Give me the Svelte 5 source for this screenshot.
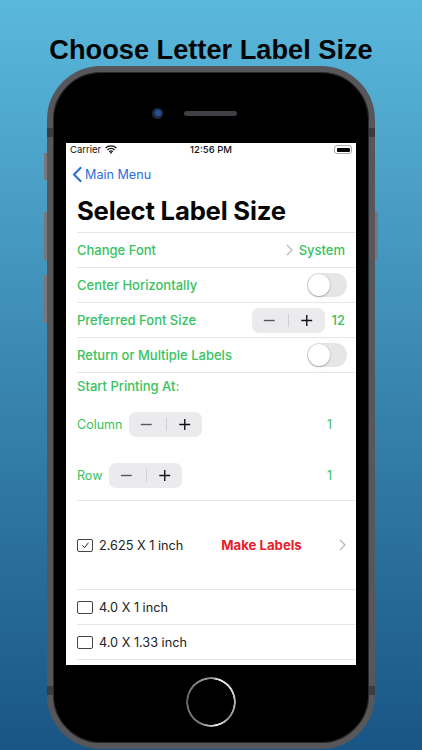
<script>
	const toggleRows = { center: 'Center Horizontally', multi: 'Return or Multiple Labels' };
	const sizes = ['4.0 X 1 inch', '4.0 X 1.33 inch'];
</script>

{#snippet stepper()}
	<div class="stepper">
		<svg width="37" height="25" viewBox="0 0 37 25"><path d="M12 12.5h11" stroke="#55555a" stroke-width="1.4" /></svg>
		<span class="step-div"></span>
		<svg width="36" height="25" viewBox="0 0 36 25"><path d="M12.5 12.5h11M18 7v11" stroke="#111" stroke-width="1.4" /></svg>
	</div>
{/snippet}

{#snippet toggle()}
	<div class="toggle"><span class="knob"></span></div>
{/snippet}

{#snippet chevron()}
	<svg class="chev" width="7" height="12" viewBox="0 0 7 12"><path d="M1 1l5 5-5 5" fill="none" stroke="#bcbcc0" stroke-width="1.4" /></svg>
{/snippet}

<main class="page">
	<h1>Choose Letter Label Size</h1>
	<div class="phone">
		<span class="side s1"></span>
		<span class="side s2"></span>
		<span class="side s3"></span>
		<span class="side s4"></span>
		<span class="band b1"></span>
		<span class="band b2"></span>
		<span class="band b3"></span>
		<span class="band b4"></span>

		<div class="earpiece">
			<span class="camera"></span>
			<span class="speaker"></span>
		</div>

		<div class="screen">
			<div class="status">
				<div class="carrier">
					Carrier
					<svg width="12" height="9" viewBox="0 0 12 9">
						<path d="M.6 3a8 8 0 0 1 10.8 0M2.4 4.9a5.3 5.3 0 0 1 7.2 0M4.2 6.7a2.7 2.7 0 0 1 3.6 0" fill="none" stroke="#111" stroke-width="1.3" />
						<path d="M6 9L4.8 7.6a1.8 1.8 0 0 1 2.4 0z" fill="#111" />
					</svg>
				</div>
				<span class="clock">12:56 PM</span>
				<div class="battery"><span></span></div>
			</div>

			<div class="nav">
				<svg width="11" height="17" viewBox="0 0 11 17"><path d="M9.2 1.2L2 8.5l7.2 7.3" fill="none" stroke="#2b6fdc" stroke-width="2.1" /></svg>
				<span>Main Menu</span>
			</div>

			<h2>Select Label Size</h2>

			<div class="row green">
				<span>Change Font</span>
				<div class="end">
					{@render chevron()}
					<span>System</span>
				</div>
			</div>
			<div class="row green">
				<span>{toggleRows.center}</span>
				{@render toggle()}
			</div>
			<div class="row green">
				<span>Preferred Font Size</span>
				<div class="end wide">
					{@render stepper()}
					<span>12</span>
				</div>
			</div>
			<div class="row green">
				<span>{toggleRows.multi}</span>
				{@render toggle()}
			</div>

			<div class="printing green">
				<div class="start">Start Printing At:</div>
				<div class="pos pos-col">
					<span class="light">Column</span>
					{@render stepper()}
					<span class="num light">1</span>
				</div>
				<div class="pos pos-row">
					<span class="light">Row</span>
					{@render stepper()}
					<span class="num light">1</span>
				</div>
			</div>

			<div class="row size first">
				<span class="box">
					<svg width="11" height="9" viewBox="0 0 11 9"><path d="M2.5 4.5l2 2.2 4-5" fill="none" stroke="#222" stroke-width="1" /></svg>
				</span>
				<span class="size-name">2.625 X 1 inch</span>
				<span class="make">Make Labels</span>
				{@render chevron()}
			</div>
			{#each sizes as size}
				<div class="row size">
					<span class="box"></span>
					<span class="size-name">{size}</span>
				</div>
			{/each}
			<div class="row last"></div>
		</div>

		<div class="home-area">
			<span class="home"></span>
		</div>
	</div>
</main>

<style>
	:global(body) {
		margin: 0;
	}

	.page {
		width: 422px;
		height: 750px;
		overflow: hidden;
		background: linear-gradient(#5ab8dc, #195585);
		font-family: Inter, "Liberation Sans", sans-serif;
	}

	h1 {
		margin: 0;
		height: 66px;
		line-height: 100px;
		text-align: center;
		font-family: "Liberation Sans", Arial, sans-serif;
		font-size: 27.2px;
		font-weight: 700;
		color: #050505;
		white-space: nowrap;
	}

	.phone {
		position: relative;
		box-sizing: border-box;
		width: 328px;
		height: 683px;
		margin-left: 47px;
		padding: 0 13px;
		background: #000;
		border: 6px solid #57575b;
		border-radius: 54px;
		box-shadow: inset 0 0 0 1px #2a2a2c;
	}

	.side {
		position: absolute;
		width: 3px;
		background: #77777c;
	}

	.s1 { left: -9px; top: 81px; height: 27px; }
	.s2 { left: -9px; top: 140px; height: 48px; }
	.s3 { left: -9px; top: 203px; height: 48px; }
	.s4 { right: -9px; top: 140px; height: 48px; }

	.band {
		position: absolute;
		width: 6px;
		height: 9px;
		background: #3c3c40;
	}

	.b1 { left: -6px; top: 56px; }
	.b2 { right: -6px; top: 56px; }
	.b3 { left: -6px; bottom: 48px; }
	.b4 { right: -6px; bottom: 48px; }

	.earpiece {
		height: 71px;
		display: flex;
		align-items: center;
		padding: 12px 0 0 86px;
		box-sizing: border-box;
		gap: 21px;
	}

	.camera {
		width: 11px;
		height: 11px;
		border-radius: 50%;
		background: radial-gradient(circle at 55% 45%, #2c4f8c 0 25%, #16233f 55%, #26262a 75%);
	}

	.speaker {
		width: 53px;
		height: 5px;
		border-radius: 3px;
		background: #404044;
	}

	.screen {
		width: 290px;
		height: 522px;
		background: #fff;
		overflow: hidden;
	}

	.status {
		height: 13px;
		padding: 0 4px;
		display: grid;
		grid-template-columns: 1fr auto 1fr;
		align-items: center;
		font-size: 9.5px;
		color: #111;
	}

	.carrier {
		display: flex;
		align-items: center;
		gap: 4px;
	}

	.clock {
		font-weight: 500;
		font-size: 9.5px;
	}

	.battery {
		justify-self: end;
		box-sizing: border-box;
		width: 18px;
		height: 9px;
		padding: 1.5px;
		border: 1px solid #aaa;
		border-radius: 3px;
	}

	.battery span {
		display: block;
		height: 100%;
		background: #000;
		border-radius: 1px;
	}

	.nav {
		height: 30px;
		padding: 6px 0 0 6px;
		box-sizing: border-box;
		display: flex;
		align-items: center;
		gap: 2px;
		font-size: 12.6px;
		color: #2b6fdc;
	}

	h2 {
		margin: 0;
		height: 46px;
		padding-left: 11px;
		line-height: 50px;
		font-size: 25.7px;
		font-weight: 700;
		letter-spacing: -0.2px;
		color: #060606;
		white-space: nowrap;
		box-sizing: border-box;
	}

	.row {
		box-sizing: border-box;
		height: 35px;
		margin-left: 11px;
		padding-right: 9px;
		display: flex;
		align-items: center;
		justify-content: space-between;
		border-top: 1px solid #e6e6e8;
		font-size: 13px;
	}

	.row.last {
		height: 6px;
	}

	.green {
		color: #38c260;
		font-weight: 500;
	}

	.end {
		display: flex;
		align-items: center;
		gap: 6px;
		padding-right: 2px;
	}

	.end.wide {
		gap: 7px;
	}

	.toggle {
		width: 40px;
		height: 24px;
		border-radius: 12px;
		background: #e6e6e9;
		display: flex;
		align-items: center;
		padding: 0 1px;
		box-sizing: border-box;
	}

	.knob {
		width: 22px;
		height: 22px;
		border-radius: 50%;
		background: #fff;
		box-shadow: 0 1px 2px rgba(0, 0, 0, 0.25), 0 0 0 0.5px rgba(0, 0, 0, 0.1);
	}

	.stepper {
		display: flex;
		align-items: center;
		width: 73px;
		height: 25px;
		border-radius: 7px;
		background: #ebebee;
	}

	.step-div {
		width: 1px;
		height: 13px;
		background: #d0d0d4;
	}

	.printing {
		box-sizing: border-box;
		height: 128px;
		margin-left: 11px;
		border-top: 1px solid #e6e6e8;
		font-size: 13px;
	}

	.start {
		height: 27px;
		line-height: 26px;
	}

	.pos {
		display: flex;
		align-items: center;
		gap: 7px;
		height: 25px;
	}

	.pos-col {
		margin-top: 12px;
	}

	.pos-row {
		margin-top: 26px;
	}

	.light {
		font-weight: 400;
		font-size: 12.5px;
	}

	.num {
		margin-left: auto;
		margin-right: 24px;
	}

	.size {
		justify-content: flex-start;
		font-weight: 400;
		font-size: 12.7px;
		color: #222;
	}

	.size.first {
		height: 89px;
	}

	.box {
		box-sizing: border-box;
		width: 16px;
		height: 13px;
		margin-right: 6px;
		border: 1.3px solid #444;
		border-radius: 2px;
		display: flex;
		align-items: center;
		justify-content: center;
		flex-shrink: 0;
	}

	.make {
		margin-left: 38px;
		font-weight: 700;
		font-size: 13.2px;
		color: #e8202c;
	}

	.chev {
		flex-shrink: 0;
	}

	.size .chev {
		margin-left: auto;
		margin-right: 1px;
	}

	.home-area {
		display: flex;
		justify-content: center;
		padding-top: 12px;
	}

	.home {
		box-sizing: border-box;
		width: 50px;
		height: 50px;
		border-radius: 50%;
		background: conic-gradient(#8a8a8a, #f0f0f0 20deg, #bbb 90deg, #888 130deg, #eee 165deg, #777 210deg, #666 290deg, #999 340deg, #8a8a8a);
		-webkit-mask: radial-gradient(circle, transparent 22.5px, #000 23px);
		mask: radial-gradient(circle, transparent 22.5px, #000 23px);
	}
</style>
